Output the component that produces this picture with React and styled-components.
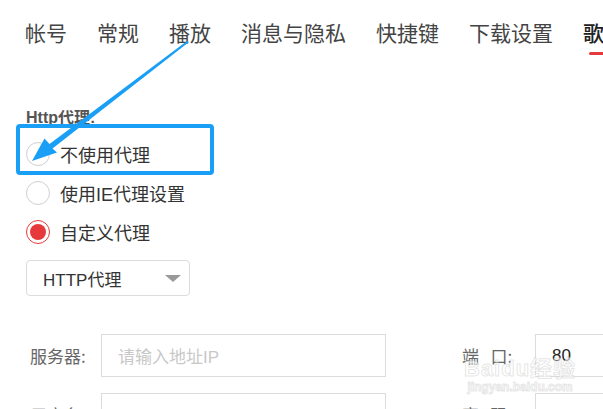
import React from 'react'
import styled, { createGlobalStyle } from 'styled-components'

const GlobalStyle = createGlobalStyle`
  html, body {
    margin: 0;
    padding: 0;
    background: #fff;
    overflow: hidden;
  }
  body {
    font-family: "Liberation Sans", "Noto Sans CJK SC", sans-serif;
    color: #333;
  }
`

const Page = styled.div`
  position: relative;
  width: 603px;
  height: 409px;
  overflow: hidden;
`

const TabBar = styled.nav`
  display: flex;
  gap: 30px;
  height: 56px;
  padding: 18px 0 0 25px;
  box-sizing: border-box;
  white-space: nowrap;
`

const Tab = styled.div`
  position: relative;
  font-family: "Noto Sans CJK SC", sans-serif;
  font-size: 21px;
  line-height: 28px;
  color: ${p => (p.$active ? '#222' : '#444')};
  font-weight: ${p => (p.$active ? 500 : 400)};
  flex-shrink: 0;

  &::after {
    content: '';
    display: ${p => (p.$active ? 'block' : 'none')};
    position: absolute;
    left: 6px;
    right: 6px;
    top: 34px;
    height: 3px;
    border-radius: 2px;
    background: #e5393b;
  }
`

const Section = styled.section`
  padding-left: 26px;
`

const GroupLabel = styled.div`
  margin-top: 52px;
  font-size: 16px;
  line-height: 20px;
  font-weight: 700;
  color: #555;
`

const RadioList = styled.div`
  display: flex;
  flex-direction: column;
  gap: 15px;
  margin-top: 14px;
`

const RadioRow = styled.label`
  display: flex;
  align-items: center;
  gap: 10px;
  height: 24px;
  font-family: "Liberation Sans", "Noto Sans CJK SC", sans-serif;
  font-size: 18px;
  color: #333;
`

const Circle = styled.span`
  position: relative;
  width: 24px;
  height: 24px;
  border-radius: 50%;
  box-sizing: border-box;
  border: 1px solid ${p => (p.$checked ? '#e5393b' : '#cfcfcf')};
  flex-shrink: 0;

  &::after {
    content: '';
    display: ${p => (p.$checked ? 'block' : 'none')};
    position: absolute;
    inset: 3px;
    border-radius: 50%;
    background: #e5393b;
  }
`

const Select = styled.div`
  display: flex;
  align-items: center;
  justify-content: space-between;
  width: 164px;
  height: 36px;
  margin-top: 16px;
  padding: 0 8px 0 16px;
  box-sizing: border-box;
  border: 1px solid #dcdcdc;
  border-radius: 4px;
  font-size: 17px;
  color: #333;
`

const Caret = styled.span`
  width: 0;
  height: 0;
  border-left: 8px solid transparent;
  border-right: 8px solid transparent;
  border-top: 7px solid #999;
`

const FormRows = styled.div`
  display: flex;
  flex-direction: column;
  gap: 16px;
  margin-top: 38px;
`

const FormRow = styled.div`
  display: flex;
  align-items: center;
  padding-left: 4px;
`

const FieldLabel = styled.span`
  width: ${p => p.$width}px;
  flex-shrink: 0;
  font-family: "Noto Sans CJK SC", sans-serif;
  font-size: 17px;
  color: #666;
  white-space: pre;
`

const Input = styled.div`
  width: ${p => p.$width}px;
  height: 43px;
  flex-shrink: 0;
  box-sizing: border-box;
  border: 1px solid #dcdcdc;
  display: flex;
  align-items: center;
  padding-left: ${p => p.$pad}px;
  font-size: 17px;
  color: ${p => (p.$placeholder ? '#c8c8c8' : '#222')};
`

const Spacer = styled.span`
  width: ${p => p.$width}px;
  flex-shrink: 0;
`

const Watermark = styled.div`
  position: absolute;
  left: 464px;
  top: 358px;
  display: flex;
  flex-direction: column;
  align-items: center;
  color: rgba(255, 255, 255, 0.6);
  -webkit-text-stroke: 1px rgba(200, 200, 200, 0.45);
  font-weight: 700;
  pointer-events: none;
`

const MarkTitle = styled.span`
  font-size: 22px;
  line-height: 22px;
  letter-spacing: 1px;
`

const MarkSub = styled.span`
  font-size: 12px;
  line-height: 14px;
`

const Highlight = styled.div`
  position: absolute;
  left: 16px;
  top: 124px;
  width: 198px;
  height: 51px;
  box-sizing: border-box;
  border: 4px solid #1a9ff7;
  border-radius: 4px;
  pointer-events: none;
`

const ArrowLayer = styled.svg`
  position: absolute;
  left: 0;
  top: 0;
  pointer-events: none;
`

const tabs = ['帐号', '常规', '播放', '消息与隐私', '快捷键', '下载设置', '歌词']

export default function App() {
  return (
    <>
      <GlobalStyle />
      <Page>
        <TabBar>
          {tabs.map(t => (
            <Tab key={t} $active={t === '歌词'}>{t}</Tab>
          ))}
        </TabBar>

        <Section>
          <GroupLabel>Http代理:</GroupLabel>
          <RadioList>
            <RadioRow><Circle />不使用代理</RadioRow>
            <RadioRow><Circle />使用IE代理设置</RadioRow>
            <RadioRow><Circle $checked />自定义代理</RadioRow>
          </RadioList>

          <Select>
            HTTP代理
            <Caret />
          </Select>

          <FormRows>
            <FormRow>
              <FieldLabel $width={71}>服务器:</FieldLabel>
              <Input $width={285} $pad={16} $placeholder>请输入地址IP</Input>
              <Spacer $width={76} />
              <FieldLabel $width={73}>端   口:</FieldLabel>
              <Input $width={120} $pad={16}>80</Input>
            </FormRow>
            <FormRow>
              <FieldLabel $width={71}>用户名:</FieldLabel>
              <Input $width={285} $pad={16} />
              <Spacer $width={76} />
              <FieldLabel $width={73}>密   码:</FieldLabel>
              <Input $width={120} $pad={16} />
            </FormRow>
          </FormRows>
        </Section>

        <Watermark>
          <MarkTitle>Baidu经验</MarkTitle>
          <MarkSub>jingyan.baidu.com</MarkSub>
        </Watermark>

        <Highlight />

        <ArrowLayer width="603" height="409" viewBox="0 0 603 409">
          <polygon
            fill="#1a9ff7"
            points="189,42 187,41 49.5,144 44.5,138.5 32,161 57,152.5 52.5,148.5"
          />
        </ArrowLayer>
      </Page>
    </>
  )
}
